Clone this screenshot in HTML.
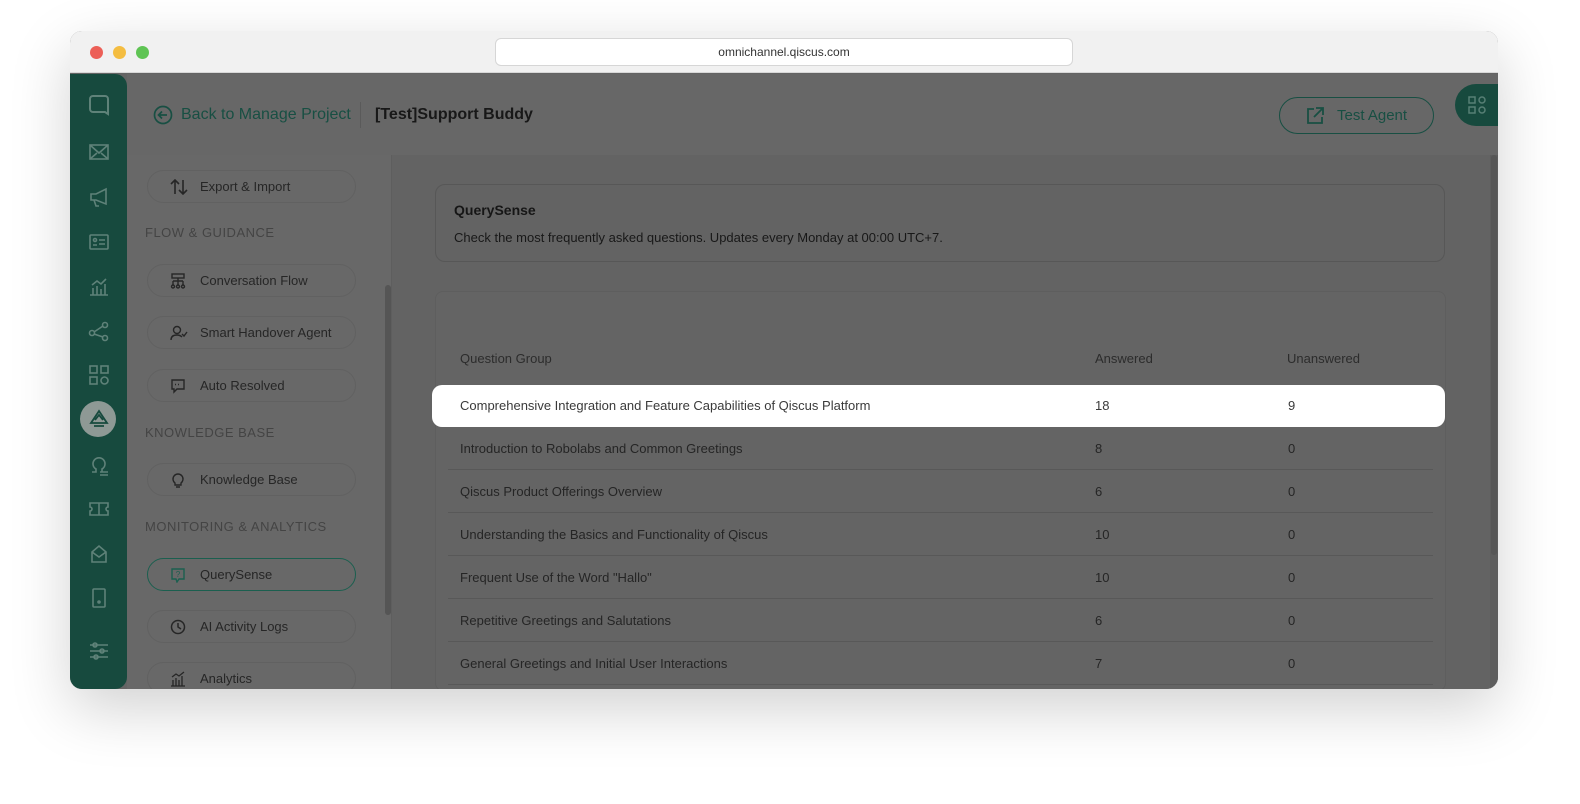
<!DOCTYPE html>
<html><head><meta charset="utf-8"><style>
*{box-sizing:border-box;margin:0;padding:0}
body{width:1580px;height:804px;background:#fff;font-family:"Liberation Sans",sans-serif;position:relative;overflow:hidden}
.win{position:absolute;left:70px;top:31px;width:1428px;height:658px;border-radius:12px;overflow:hidden;box-shadow:0 20px 60px rgba(0,0,0,.18);background:#646464}
.tb{position:absolute;left:0;top:0;width:100%;height:42px;background:#f1f1f1;border-bottom:1px solid #d8d8d8}
.dot{position:absolute;top:15px;width:13px;height:13px;border-radius:50%}
.url{position:absolute;left:425px;top:7px;width:578px;height:28px;background:#fff;border:1px solid #d6d6d6;border-radius:6px;text-align:center;font-size:12px;line-height:27px;color:#333}
.side{position:absolute;left:0;top:43px;width:57px;height:615px;background:#174a3e;border-radius:0 12px 12px 0}
.ico{position:absolute;left:18px;width:22px;height:22px}
.hdr{position:absolute;left:57px;top:43px;right:0;height:81px;background:#676767}
.lp{position:absolute;left:57px;top:124px;width:265px;height:534px;background:#686868;border-right:1px solid #5e5e5e}
.btn{position:absolute;left:20px;width:209px;height:33px;border:1px solid #616161;border-radius:17px;font-size:13px;color:#262626;line-height:31px;padding-left:52px}
.btn svg{position:absolute;left:22px;top:8px}
.sec{position:absolute;left:18px;font-size:13px;letter-spacing:.5px;color:#444}
.main{position:absolute;left:322px;top:124px;right:0;height:534px;background:#636363}
.card{position:absolute;left:365px;top:153px;width:1010px;height:78px;border:1px solid #575757;border-radius:10px}
.tbl{position:absolute;left:365px;top:260px;width:1011px;height:400px;background:#646464;border:1px solid #5e5e5e;border-radius:8px}
.row{position:absolute;left:378px;width:985px;height:43px;border-bottom:1px solid #585858;font-size:13px;color:#252525;line-height:43px}
.row span{position:absolute}
</style></head><body>
<div class="win">
 <div class="tb">
  <div class="dot" style="left:20px;background:#ec5f57"></div>
  <div class="dot" style="left:43px;background:#f4bd41"></div>
  <div class="dot" style="left:66px;background:#5fc454"></div>
  <div class="url">omnichannel.qiscus.com</div>
 </div>
 <div class="hdr">
  <svg style="position:absolute;left:26px;top:31px" width="20" height="20" viewBox="0 0 20 20" fill="none" stroke="#184f43" stroke-width="1.7"><circle cx="10" cy="10" r="8.5"/><path d="M14 10H6M9 6.5 5.5 10 9 13.5"/></svg>
  <div style="position:absolute;left:54px;top:32px;font-size:16px;color:#184f43">Back to Manage Project</div>
  <div style="position:absolute;left:233px;top:28px;width:1px;height:26px;background:#5a5a5a"></div>
  <div style="position:absolute;left:248px;top:32px;font-size:16px;font-weight:bold;color:#181818">[Test]Support Buddy</div>
  <div style="position:absolute;left:1152px;top:23px;width:155px;height:37px;border:1px solid #184f43;border-radius:19px;font-size:15px;color:#184f43;line-height:35px;padding-left:57px">Test Agent
   <svg style="position:absolute;left:25px;top:8px" width="20" height="20" viewBox="0 0 20 20" fill="none" stroke="#184f43" stroke-width="1.8"><path d="M9 3H3v14h14v-6M11 2h7v7M18 2 9 11"/></svg></div>
  <div style="position:absolute;left:1328px;top:10px;width:50px;height:42px;background:#174a3e;border-radius:21px 0 0 21px">
   <svg style="position:absolute;left:13px;top:12px" width="18" height="18" viewBox="0 0 18 18" fill="none" stroke="#577f75" stroke-width="1.5"><rect x="1" y="1" width="6" height="6"/><circle cx="14" cy="4" r="3"/><rect x="1" y="11" width="6" height="6"/><circle cx="14" cy="14" r="3"/></svg></div>
 </div>
 <div class="side">
  <svg class="ico" style="top:20px" viewBox="0 0 22 22" fill="none" stroke="#5f8279" stroke-width="2"><path d="M5 2h12a3 3 0 0 1 3 3v15l-3-2H5a3 3 0 0 1-3-3V5a3 3 0 0 1 3-3z"/></svg>
  <svg class="ico" style="top:67px" viewBox="0 0 22 22" fill="none" stroke="#5f8279" stroke-width="1.6"><rect x="2" y="4" width="18" height="14"/><path d="M2 4l9 8 9-8M2 18l7-6M20 18l-7-6"/></svg>
  <svg class="ico" style="top:112px" viewBox="0 0 22 22" fill="none" stroke="#5f8279" stroke-width="1.6"><path d="M3 8h5l10-5v15L8 14H3zM6 14l2 6h3"/></svg>
  <svg class="ico" style="top:157px" viewBox="0 0 22 22" fill="none" stroke="#5f8279" stroke-width="1.6"><rect x="2" y="4" width="18" height="14" rx="1"/><circle cx="7" cy="9" r="1.5"/><path d="M11 9h6M11 13h6M5 14h4"/></svg>
  <svg class="ico" style="top:201px" viewBox="0 0 22 22" fill="none" stroke="#5f8279" stroke-width="1.6"><path d="M2 20h18M5 20v-7M9 20v-9M13 20v-6M17 20V9M4 10l5-4 4 3 5-5"/></svg>
  <svg class="ico" style="top:246px" viewBox="0 0 22 22" fill="none" stroke="#5f8279" stroke-width="1.6"><circle cx="4" cy="13" r="2.5"/><circle cx="17" cy="5" r="2.5"/><circle cx="17" cy="18" r="2.5"/><path d="M6 12l9-6M6 14l9 3"/></svg>
  <svg class="ico" style="top:290px" viewBox="0 0 22 22" fill="none" stroke="#5f8279" stroke-width="1.6"><rect x="2" y="2" width="7" height="7"/><rect x="13" y="2" width="7" height="7"/><rect x="2" y="13" width="7" height="7"/><circle cx="16.5" cy="16.5" r="3.5"/></svg>
  <div style="position:absolute;left:10px;top:327px;width:36px;height:36px;border-radius:50%;background:#8e9995"></div>
  <svg class="ico" style="top:334px" viewBox="0 0 22 22" fill="none" stroke="#174a3e" stroke-width="1.8"><path d="M11 3 3 15h16zM7 12l4-5 4 5M6 18h10"/></svg>
  <svg class="ico" style="top:380px" viewBox="0 0 22 22" fill="none" stroke="#5f8279" stroke-width="1.6"><path d="M4 18h4v-3a6 6 0 1 1 6 0v3h4M12 18h8M12 21h8"/></svg>
  <svg class="ico" style="top:424px" viewBox="0 0 22 22" fill="none" stroke="#5f8279" stroke-width="1.6"><path d="M2 5h18v4a2 2 0 0 0 0 4v4H2v-4a2 2 0 0 0 0-4zM11 5v12"/></svg>
  <svg class="ico" style="top:469px" viewBox="0 0 22 22" fill="none" stroke="#5f8279" stroke-width="1.6"><path d="M4 9l7-6 7 6v10H4zM4 9l7 5 7-5"/></svg>
  <svg class="ico" style="top:513px" viewBox="0 0 22 22" fill="none" stroke="#5f8279" stroke-width="1.6"><rect x="5" y="2" width="12" height="18" rx="1"/><circle cx="11" cy="15" r="1"/></svg>
  <svg class="ico" style="top:566px" viewBox="0 0 22 22" fill="none" stroke="#5f8279" stroke-width="1.6"><path d="M2 5h18M2 11h18M2 17h18"/><circle cx="7" cy="5" r="2"/><circle cx="14" cy="11" r="2"/><circle cx="8" cy="17" r="2"/></svg>
 </div>
 <div class="lp">
  <div style="position:absolute;left:258px;top:130px;width:6px;height:330px;background:#555;border-radius:3px"></div>
  <div class="btn" style="top:15px"><svg width="18" height="16" viewBox="0 0 18 16" fill="none" stroke="#262626" stroke-width="1.6"><path d="M5 15V1M1 5l4-4 4 4M13 1v14M9 11l4 4 4-4"/></svg>Export &amp; Import</div>
  <div class="sec" style="top:70px">FLOW &amp; GUIDANCE</div>
  <div class="btn" style="top:109px"><svg width="16" height="16" viewBox="0 0 16 16" fill="none" stroke="#262626" stroke-width="1.4"><rect x="2" y="1" width="12" height="4"/><path d="M8 5v3M3 8h10M3 8v4M8 8v4M13 8v4"/><circle cx="3" cy="13.5" r="1.5"/><circle cx="8" cy="13.5" r="1.5"/><circle cx="13" cy="13.5" r="1.5"/></svg>Conversation Flow</div>
  <div class="btn" style="top:161px"><svg width="18" height="16" viewBox="0 0 18 16" fill="none" stroke="#262626" stroke-width="1.4"><circle cx="7" cy="5" r="3.5"/><path d="M1 15c0-4 3-5 6-5s4 1 5 2M12 9l2 2 3-4"/></svg>Smart Handover Agent</div>
  <div class="btn" style="top:214px"><svg width="16" height="16" viewBox="0 0 16 16" fill="none" stroke="#262626" stroke-width="1.4"><path d="M2 2h12v9H7l-3 3v-3H2z"/><path d="M5 6.5h1M8 6.5h1M11 6.5h0"/></svg>Auto Resolved</div>
  <div class="sec" style="top:270px">KNOWLEDGE BASE</div>
  <div class="btn" style="top:308px"><svg width="16" height="16" viewBox="0 0 16 16" fill="none" stroke="#262626" stroke-width="1.4"><path d="M5 11a5 5 0 1 1 6 0v2H5zM6 15h4"/></svg>Knowledge Base</div>
  <div class="sec" style="top:364px">MONITORING &amp; ANALYTICS</div>
  <div class="btn" style="top:403px;border-color:#1b5f4f"><svg width="16" height="16" viewBox="0 0 16 16" fill="none" stroke="#1b5f4f" stroke-width="1.4"><path d="M2 2h12v10H9l-2 3-1-3H2z"/><text x="8" y="10" font-size="8" fill="#1b5f4f" stroke="none" text-anchor="middle" font-family="Liberation Sans">?</text></svg>QuerySense</div>
  <div class="btn" style="top:455px"><svg width="16" height="16" viewBox="0 0 16 16" fill="none" stroke="#262626" stroke-width="1.5"><circle cx="8" cy="8" r="6.5"/><path d="M8 4v4l3 2"/></svg>AI Activity Logs</div>
  <div class="btn" style="top:507px"><svg width="16" height="16" viewBox="0 0 16 16" fill="none" stroke="#262626" stroke-width="1.3"><path d="M1 15h14M3 15V9M6 15V7M9 15V9M12 15V5M2 6l4-3 3 2 5-4"/></svg>Analytics</div>
 </div>
 <div class="main">
  <div style="position:absolute;right:0;top:0;width:8px;height:534px;background:#5d5d5d"></div>
  <div style="position:absolute;right:1px;top:0;width:6px;height:400px;background:#565656;border-radius:3px"></div>
 </div>
 <div class="card">
  <div style="position:absolute;left:18px;top:17px;font-size:14px;font-weight:bold;color:#161616">QuerySense</div>
  <div style="position:absolute;left:18px;top:45px;font-size:13px;color:#181818">Check the most frequently asked questions. Updates every Monday at 00:00 UTC+7.</div>
 </div>
 <div class="tbl"></div>
 <div style="position:absolute;left:390px;top:320px;font-size:13px;color:#2c2c2c">Question Group</div>
 <div style="position:absolute;left:1025px;top:320px;font-size:13px;color:#2c2c2c">Answered</div>
 <div style="position:absolute;left:1217px;top:320px;font-size:13px;color:#2c2c2c">Unanswered</div>
 <div style="position:absolute;left:362px;top:354px;width:1013px;height:42px;background:#fff;border-radius:10px;font-size:13px;color:#3a3a3a;line-height:42px">
  <span style="position:absolute;left:28px">Comprehensive Integration and Feature Capabilities of Qiscus Platform</span>
  <span style="position:absolute;left:663px">18</span><span style="position:absolute;left:856px">9</span></div>
 <div class="row" style="top:396px"><span style="left:12px">Introduction to Robolabs and Common Greetings</span><span style="left:647px">8</span><span style="left:840px">0</span></div>
 <div class="row" style="top:439px"><span style="left:12px">Qiscus Product Offerings Overview</span><span style="left:647px">6</span><span style="left:840px">0</span></div>
 <div class="row" style="top:482px"><span style="left:12px">Understanding the Basics and Functionality of Qiscus</span><span style="left:647px">10</span><span style="left:840px">0</span></div>
 <div class="row" style="top:525px"><span style="left:12px">Frequent Use of the Word "Hallo"</span><span style="left:647px">10</span><span style="left:840px">0</span></div>
 <div class="row" style="top:568px"><span style="left:12px">Repetitive Greetings and Salutations</span><span style="left:647px">6</span><span style="left:840px">0</span></div>
 <div class="row" style="top:611px"><span style="left:12px">General Greetings and Initial User Interactions</span><span style="left:647px">7</span><span style="left:840px">0</span></div>
</div>
</body></html>
